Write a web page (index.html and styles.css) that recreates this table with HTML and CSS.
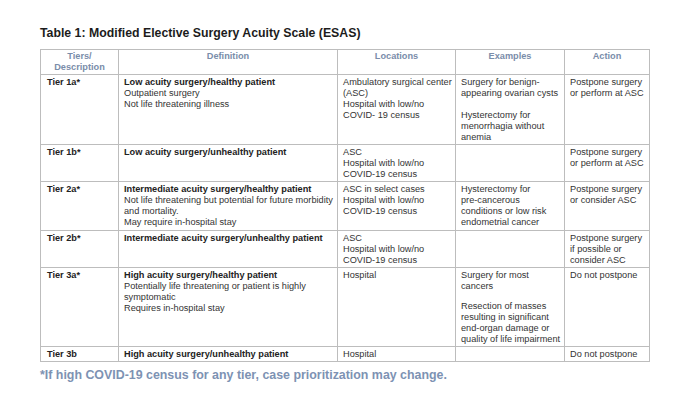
FILE: index.html
```html
<!DOCTYPE html>
<html>
<head>
<meta charset="utf-8">
<link rel="stylesheet" href="styles.css">
</head>
<body>
<h1 class="title">Table 1: Modified Elective Surgery Acuity Scale (ESAS)</h1>
<table class="esas">
  <colgroup>
    <col class="c-tier"><col class="c-def"><col class="c-loc"><col class="c-ex"><col class="c-act">
  </colgroup>
  <thead>
    <tr class="r-head">
      <th>Tiers/<br>Description</th>
      <th>Definition</th>
      <th>Locations</th>
      <th>Examples</th>
      <th>Action</th>
    </tr>
  </thead>
  <tbody>
    <tr class="r-1a">
      <td class="tier">Tier 1a*</td>
      <td><b>Low acuity surgery/healthy patient</b><br>Outpatient surgery<br>Not life threatening illness</td>
      <td>Ambulatory surgical center<br>(ASC)<br>Hospital with low/no<br>COVID- 19 census</td>
      <td>Surgery for benign-<br>appearing ovarian cysts<p class="para">Hysterectomy for<br>menorrhagia without<br>anemia</p></td>
      <td>Postpone surgery<br>or perform at ASC</td>
    </tr>
    <tr class="r-1b">
      <td class="tier">Tier 1b*</td>
      <td><b>Low acuity surgery/unhealthy patient</b></td>
      <td>ASC<br>Hospital with low/no<br>COVID-19 census</td>
      <td></td>
      <td>Postpone surgery<br>or perform at ASC</td>
    </tr>
    <tr class="r-2a">
      <td class="tier">Tier 2a*</td>
      <td><b>Intermediate acuity surgery/healthy patient</b><br>Not life threatening but potential for future morbidity<br>and mortality.<br>May require in-hospital stay</td>
      <td>ASC in select cases<br>Hospital with low/no<br>COVID-19 census</td>
      <td>Hysterectomy for<br>pre-cancerous<br>conditions or low risk<br>endometrial cancer</td>
      <td>Postpone surgery<br>or consider ASC</td>
    </tr>
    <tr class="r-2b">
      <td class="tier">Tier 2b*</td>
      <td><b>Intermediate acuity surgery/unhealthy patient</b></td>
      <td>ASC<br>Hospital with low/no<br>COVID-19 census</td>
      <td></td>
      <td>Postpone surgery<br>if possible or<br>consider ASC</td>
    </tr>
    <tr class="r-3a">
      <td class="tier">Tier 3a*</td>
      <td><b>High acuity surgery/healthy patient</b><br>Potentially life threatening or patient is highly<br>symptomatic<br>Requires in-hospital stay</td>
      <td>Hospital</td>
      <td>Surgery for most<br>cancers<p class="para para-sm">Resection of masses<br>resulting in significant<br>end-organ damage or<br>quality of life impairment</p></td>
      <td>Do not postpone</td>
    </tr>
    <tr class="r-3b">
      <td class="tier">Tier 3b</td>
      <td><b>High acuity surgery/unhealthy patient</b></td>
      <td>Hospital</td>
      <td></td>
      <td>Do not postpone</td>
    </tr>
  </tbody>
</table>
<p class="note">*If high COVID-19 census for any tier, case prioritization may change.</p>
</body>
</html>
```

FILE: styles.css
```css
html, body {
  margin: 0;
  padding: 0;
  background: #ffffff;
}
body {
  padding: 26px 0 0 40px;
  font-family: "Liberation Sans", Arial, sans-serif;
  color: #333333;
}
.title {
  margin: 0 0 9px 0;
  font-size: 12.3px;
  line-height: 14px;
  font-weight: bold;
  color: #1c1c1c;
}
.esas {
  border-collapse: collapse;
  table-layout: fixed;
  width: 609px;
  font-size: 9.2px;
  line-height: 11px;
}
.c-tier { width: 78px; }
.c-def { width: 219px; }
.c-loc { width: 118px; }
.c-ex { width: 109px; }
.c-act { width: 85px; }
.esas th,
.esas td {
  border: 1px solid #bdbdbd;
  vertical-align: top;
  text-align: left;
  padding: 2px 5px 1px 5px;
  white-space: nowrap;
  box-sizing: border-box;
}
.esas th {
  text-align: center;
  font-weight: bold;
  color: #7a8daa;
  padding-top: 1px;
}
.esas td b {
  color: #222222;
}
.esas td.tier {
  font-weight: bold;
  color: #222222;
  padding-left: 6px;
}
.r-head { height: 25px; }
.r-1a { height: 70px; }
.r-1b { height: 37px; }
.r-2a { height: 49px; }
.r-2b { height: 37px; }
.r-3a { height: 78px; }
.r-3b { height: 15px; }
.para {
  margin: 11px 0 0 0;
}
.para-sm {
  margin-top: 9px;
}
.note {
  margin: 6px 0 0 0;
  font-size: 12.4px;
  line-height: 14px;
  font-weight: bold;
  color: #7d92b3;
}
```
